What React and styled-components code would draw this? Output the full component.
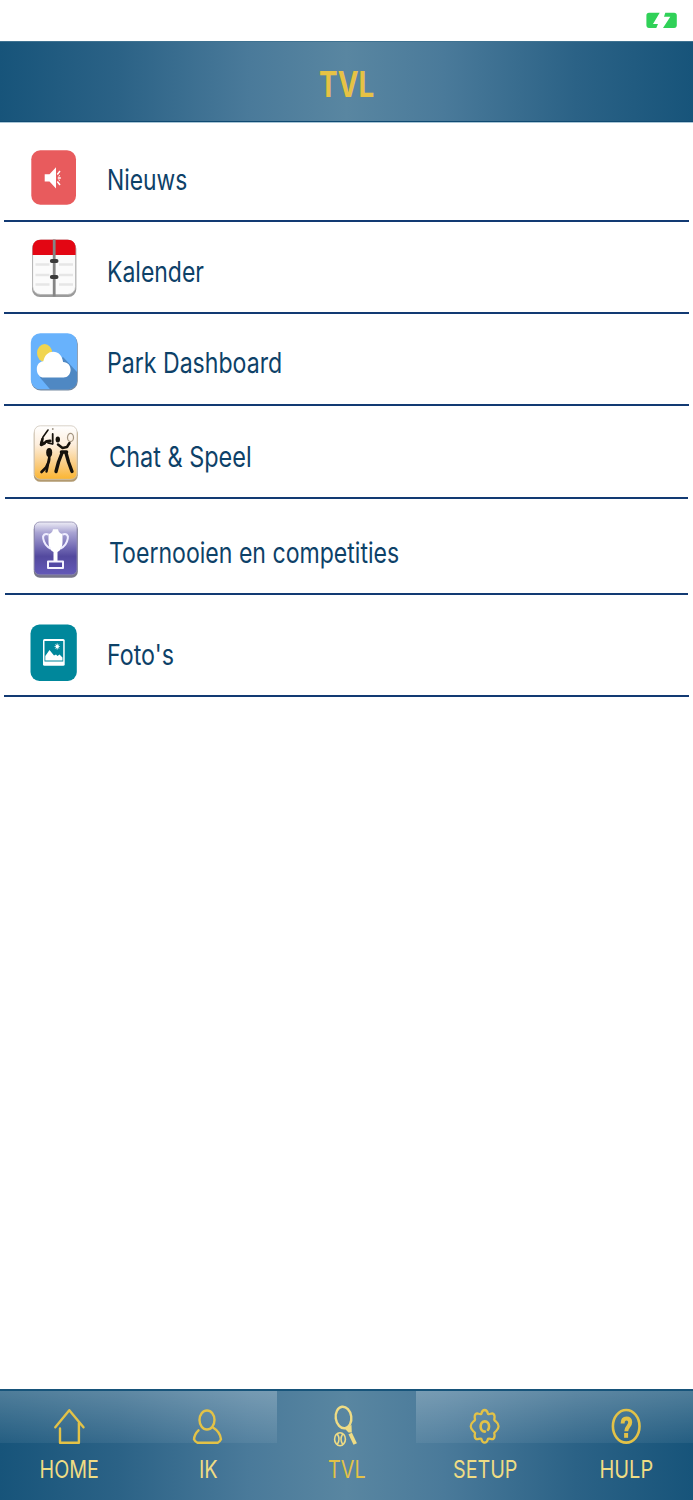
import styled, { createGlobalStyle } from 'styled-components';

const GlobalStyle = createGlobalStyle`
  * {
    box-sizing: border-box;
  }

  body {
    margin: 0;
    background: #fff;
    font-family: Inter, 'Liberation Sans', sans-serif;
  }
`;

const Screen = styled.div`
  width: 693px;
  height: 1500px;
  display: flex;
  flex-direction: column;
  background: #fff;
  overflow: hidden;
`;

const StatusBar = styled.div`
  height: 41px;
  padding: 12px 15px 0 0;
  display: flex;
  justify-content: flex-end;
`;

const Header = styled.header`
  height: 81px;
  margin-bottom: 1px;
  display: flex;
  justify-content: center;
  background: linear-gradient(90deg, #17547a 0%, #2b6286 17%, #4a7a9a 36%, #5986a1 50%, #4a7a9a 64%, #2b6286 83%, #17547a 100%);
  border-top: 1px solid #3f7291;
  border-bottom: 1px solid #0f4a72;
  box-shadow: 0 1px 0 #a9c6d6;
`;

const Title = styled.h1`
  margin: 0;
  padding-top: 21px;
  color: #e6c245;
  font-size: 35px;
  line-height: 42px;
  font-weight: 700;
  transform: scaleX(${({ $scale }) => $scale});
`;

const List = styled.ul`
  flex: 1;
  margin: 0;
  padding: 0;
  list-style: none;
`;

const Row = styled.li`
  height: ${({ $height }) => $height}px;
  margin: 0 ${({ $inset }) => $inset}px;
  padding: ${({ $top }) => $top}px 0 0 ${({ $inset }) => 28 - $inset}px;
  display: flex;
  align-items: flex-start;
  border-bottom: 2px solid #123a73;
`;

const RowIcon = styled.svg`
  width: 52px;
  height: 64px;
  flex: none;
  display: block;
`;

const RowLabel = styled.span`
  margin: ${({ $y }) => $y}px 0 0 ${({ $x }) => $x}px;
  color: #0d4168;
  font-size: 28px;
  line-height: 34px;
  white-space: nowrap;
  transform-origin: left center;
  transform: scaleX(${({ $scale }) => $scale});
`;

const TabBar = styled.nav`
  height: 111px;
  display: grid;
  grid-template-columns: 139px 138px 139px 138px 139px;
  border-top: 2px solid #17547a;
  background: linear-gradient(90deg, #17547a 0%, #2b6286 17%, #4a7a9a 36%, #5986a1 50%, #4a7a9a 64%, #2b6286 83%, #17547a 100%);
`;

const Tab = styled.div`
  display: flex;
  flex-direction: column;
  align-items: center;
  padding-top: 13px;
  padding-left: ${({ $shift = 0 }) => $shift}px;
  background: ${({ $active }) =>
    $active ? 'none' : 'linear-gradient(180deg, rgba(255,255,255,0.24), rgba(255,255,255,0.06)) top / 100% 52px no-repeat'};
`;

const TabIcon = styled.svg`
  width: 44px;
  height: 44px;
  fill: none;
  stroke: ${({ $pale }) => ($pale ? '#efdc84' : '#e3c247')};
  stroke-width: 2.4;
  stroke-linecap: round;
  stroke-linejoin: round;
`;

const TabLabel = styled.span`
  margin-top: 6px;
  color: ${({ $active }) => ($active ? '#e3c247' : '#efdc84')};
  font-size: 24px;
  line-height: 32px;
  transform: scaleX(${({ $scale }) => $scale});
`;

const NewsIcon = () => (
  <RowIcon viewBox="0 0 52 64">
    <rect x="3.3" y="4.3" width="44.7" height="54.4" rx="9" fill="#e85b5d" />
    <path d="M16.7 28.2h4.8l6.5-7v21.4l-6.5-7h-4.8z" fill="#fff" />
    <path d="M29.3 28.5l2.7-3.5M29.8 32h3M29.3 35.5l2.7 3.5" stroke="#fff" strokeWidth="1.5" />
    <path d="M30.5 30.3l1.5-.8M30.5 33.7l1.5.8" stroke="#fff" strokeWidth="1" />
  </RowIcon>
);

const CalendarIcon = () => (
  <RowIcon viewBox="0 0 52 64">
    <rect x="4" y="5" width="44.3" height="56" rx="8" fill="#9a9a9a" />
    <rect x="4.6" y="4" width="43" height="54.5" rx="8" fill="#fbfbfb" stroke="#b4b4b4" strokeWidth="0.8" />
    <path d="M4.6 19v-7c0-5 3-8.3 8-8.3h27c5 0 8 3.3 8 8.3v7z" fill="#e30613" />
    <path d="M7.5 28.5h14M31 28.5h14M7.5 39h14M31 39h14M7.5 48.5h14M31 48.5h14" stroke="#e6e6e6" strokeWidth="2.5" />
    <path d="M26.2 3.5v57" stroke="#858585" strokeWidth="2.8" />
    <path d="M23.8 25h4.8M23.8 41h4.8" stroke="#3a3a3a" strokeWidth="3.8" strokeLinecap="round" />
  </RowIcon>
);

const WeatherIcon = () => (
  <RowIcon viewBox="0 0 52 64">
    <rect x="3.3" y="4.5" width="46.5" height="56" rx="9.5" fill="#7689a0" />
    <rect x="2.8" y="3.2" width="46.2" height="56" rx="9.5" fill="#68b2fc" />
    <path d="M12 47.4l10 11.8h17.5c6 0 9.5-4 9.5-9.5V42L35 27z" fill="#4f88c3" />
    <ellipse cx="16.6" cy="23" rx="7.6" ry="9" fill="#f1d550" />
    <path d="M16 47.5c-4.4 0-7.2-3.7-7.2-8.3 0-4.4 2.8-7.8 6.5-7.9 1.3-6.3 5-9.6 10-9.6 5.2 0 9 3.9 9.8 10.2 4.7.1 7.5 3.5 7.5 7.9 0 4.500-3 7.700-7 7.700z" fill="#fff" />
  </RowIcon>
);

const PlayersIcon = () => (
  <RowIcon viewBox="0 0 52 64">
    <defs>
      <linearGradient id="playersFill" x1="0" y1="0" x2="0" y2="1">
        <stop offset="0" stopColor="#fff" />
        <stop offset="0.35" stopColor="#fdeedd" />
        <stop offset="0.75" stopColor="#fac978" />
        <stop offset="1" stopColor="#fbb530" />
      </linearGradient>
    </defs>
    <rect x="5.8" y="5.5" width="44" height="54.3" rx="6.5" fill="#b29a70" />
    <rect x="6.3" y="3.8" width="42.7" height="53.5" rx="6" fill="url(#playersFill)" stroke="#cfc7ba" strokeWidth="0.8" />
    <g fill="none" stroke="#16120c" strokeLinecap="round" strokeLinejoin="round">
      <path d="M20 8l-5 7-2 6" strokeWidth="1.6" />
      <path d="M14.5 17l-1.5 5.5" strokeWidth="2.6" />
      <path d="M13.5 22.5l3-1.5M18.5 19.5l3.500-.5" strokeWidth="3.2" />
      <path d="M24.7 12v9.500" strokeWidth="1.8" />
      <path d="M20 21l4.500 1" strokeWidth="1.6" />
      <path d="M21.5 32l-.5 7-3 6.500-4.500 4.500" strokeWidth="2.6" />
      <path d="M21 37l-1.500 8-1 4.500" strokeWidth="2.4" />
      <path d="M30 22.500l4.500 3.500 4.500-1 2.500-4" strokeWidth="2.5" />
      <path d="M33.500 30h5" strokeWidth="3.600" />
      <path d="M34 31l-3.500 9-2.500 9.500M38 31l2.500 9 3.500 9.500" strokeWidth="3.400" />
      <ellipse cx="42.5" cy="15.5" rx="3" ry="4.2" stroke="#a59682" strokeWidth="1.2" />
    </g>
    <ellipse cx="29.8" cy="17.5" rx="2.2" ry="3" fill="#16120c" />
    <ellipse cx="21.2" cy="30.500" rx="3" ry="4.500" fill="#16120c" />
    <circle cx="24.8" cy="7" r="0.9" fill="#9a9184" />
  </RowIcon>
);

const TrophyIcon = () => (
  <RowIcon viewBox="0 0 52 64">
    <defs>
      <linearGradient id="trophyFill" x1="0" y1="0" x2="0" y2="1">
        <stop offset="0" stopColor="#eeedf6" />
        <stop offset="0.2" stopColor="#a9a4d3" />
        <stop offset="0.5" stopColor="#6f67b2" />
        <stop offset="0.65" stopColor="#53499e" />
        <stop offset="1" stopColor="#6459b8" />
      </linearGradient>
    </defs>
    <rect x="5.8" y="5.5" width="44" height="54.3" rx="6" fill="#77768a" />
    <rect x="6.3" y="4" width="42.7" height="52.8" rx="5.5" fill="url(#trophyFill)" stroke="#8d88ad" strokeWidth="0.8" />
    <path d="M20.5 16c2.5-.8 4-1.8 4.5-4.8h5c.5 3 2 4 4.5 4.8v8c0 5-1.800 8.500-5 10v9h-4v-9c-3.200-1.500-5-5-5-10z" fill="#fff" />
    <path d="M20.5 16.500c-3.500-1.500-6 .5-5.300 4 .8 4.500 3.300 8 7.300 10M34.500 16.500c3.500-1.500 6 .5 5.300 4-.8 4.500-3.300 8-7.300 10" fill="none" stroke="#eeecff" strokeWidth="2" />
    <path d="M20 43.500h15v6.500H20z" fill="#5147a5" stroke="#f5f3ff" strokeWidth="2" strokeLinejoin="round" />
  </RowIcon>
);

const PhotoIcon = () => (
  <RowIcon viewBox="0 0 52 64">
    <rect x="2.5" y="3.5" width="46.3" height="56.5" rx="9" fill="#00879b" />
    <rect x="15" y="18" width="21.7" height="26.8" rx="1.5" fill="#fff" />
    <path d="M16.5 20h18.7v20.5H16.5z" fill="#00879b" />
    <path d="M17.3 39.5V35l4.200-6 4.500 5.500 2-1 1.500 1.500 2-1.500 3 3v3z" fill="#fff" />
    <ellipse cx="29.2" cy="25.5" rx="1.6" ry="1.9" fill="#fff" />
    <path d="M29.2 22.3v6.4M26.4 25.5h5.6M27.2 23.2l4 4.6M31.2 23.2l-4 4.6" stroke="#fff" strokeWidth="0.6" />
  </RowIcon>
);

const rows = [
  { label: 'Nieuws', icon: <NewsIcon />, height: 99, top: 23, inset: 4, x: 27.3, y: 17, scale: 0.815 },
  { label: 'Kalender', icon: <CalendarIcon />, height: 92, top: 14, inset: 4, x: 27.3, y: 19, scale: 0.82 },
  { label: 'Park Dashboard', icon: <WeatherIcon />, height: 92, top: 16, inset: 4, x: 27.3, y: 16, scale: 0.825 },
  { label: 'Chat & Speel', icon: <PlayersIcon />, height: 93, top: 16, inset: 5, x: 29, y: 18, scale: 0.838 },
  { label: 'Toernooien en competities', icon: <TrophyIcon />, height: 96, top: 19, inset: 5, x: 29, y: 18, scale: 0.824 },
  { label: "Foto's", icon: <PhotoIcon />, height: 102, top: 26, inset: 4, x: 27.3, y: 16.5, scale: 0.83 },
];

const HomeIcon = () => (
  <TabIcon viewBox="0 0 44 44">
    <path d="M7.3 23.3L21.3 6.2 35.5 23.3M12 24.5v14.3h18.9V19" />
  </TabIcon>
);

const PersonIcon = () => (
  <TabIcon viewBox="0 0 44 44">
    <ellipse cx="21" cy="16" rx="7.5" ry="9.5" />
    <path d="M12.5 26.3c-2.6 2.5-4.2 5.5-4.5 9M11.5 38.8h20.300c1.400-.8 2.500-2 3.200-3.500-.5-5-3.500-9-8-11.800M8 35.300c.7 1.500 2 2.700 3.500 3.500" />
  </TabIcon>
);

const RacketIcon = () => (
  <TabIcon viewBox="0 0 44 44" $pale>
    <ellipse cx="18.5" cy="13.5" rx="7.8" ry="10.8" transform="rotate(-8 18.5 13.5)" />
    <path d="M19.5 24.3l4 4.200h3.300l-.3-7.500z" fill="#efdc84" stroke="none" />
    <path d="M25.2 29.500l5 10.500" strokeWidth="3.8" strokeLinecap="butt" />
    <ellipse cx="15" cy="35.2" rx="5.400" ry="6.500" strokeWidth="1.6" />
    <path d="M12.600 30.500c1.800 3 1.800 6.400 0 9.400M17.400 30.500c-1.800 3-1.800 6.400 0 9.400" strokeWidth="1.5" />
  </TabIcon>
);

const GearIcon = () => (
  <TabIcon viewBox="0 0 44 44">
    <g transform="translate(1.900 0.700) scale(0.940 0.970)">
      <path d="M21 5.500c2.200 0 3 1.300 3.600 4 2.200.9 3.800-1.500 5.800 0 1.700 1.500 1.500 3.300.8 5.900 1.200 2.400 4.600 2.400 4.600 6.900s-3.400 4.500-4.600 6.900c.7 2.600.9 4.400-.8 5.900-2 1.500-3.600-.9-5.800 0-.6 2.700-1.400 4-3.600 4s-3-1.300-3.600-4c-2.200-.9-3.800 1.500-5.800 0-1.700-1.500-1.500-3.300-.8-5.900-1.200-2.400-4.600-2.400-4.600-6.900s3.400-4.500 4.600-6.900c-.7-2.600-.9-4.400.8-5.900 2-1.500 3.600.9 5.800 0 .6-2.700 1.400-4 3.600-4z" />
      <path d="M21.300 27.700c-2.800 0-4.600-2.200-4.600-5.200s1.800-5.300 4.500-5.300 4.500 2.200 4.500 5.200c0 1.400-.4 2.600-1.200 3.500" strokeWidth="2.8" />
    </g>
  </TabIcon>
);

const HelpIcon = () => (
  <TabIcon viewBox="0 0 44 44">
    <ellipse cx="21.2" cy="22.3" rx="13.3" ry="16.3" strokeWidth="2.6" />
    <path d="M17.6 19.500c0-3.500 1.300-5 3.900-5 2.500 0 3.700 1.400 3.700 3.800 0 4.200-3.900 4.200-3.900 8.900" strokeWidth="4" strokeLinecap="butt" />
    <path d="M21.100 29v4.800" strokeWidth="4" strokeLinecap="butt" />
  </TabIcon>
);

const tabs = [
  { label: 'HOME', icon: <HomeIcon />, scale: 0.82, shift: 0 },
  { label: 'IK', icon: <PersonIcon />, scale: 0.83, shift: -1 },
  { label: 'TVL', icon: <RacketIcon />, scale: 0.82, shift: 0, active: true },
  { label: 'SETUP', icon: <GearIcon />, scale: 0.82, shift: 0 },
  { label: 'HULP', icon: <HelpIcon />, scale: 0.83, shift: 6 },
];

export default function App() {
  return (
    <>
      <GlobalStyle />
      <Screen>
        <StatusBar>
          <svg width="32" height="17" viewBox="0 0 32 17">
            <path d="M3 .8h10.700L7 12h5l-1.700 3.900H3c-1.600 0-2.600-1-2.600-2.600V3.400C.4 1.800 1.400.8 3 .8zM19.300.8H28c1.800 0 2.800 1 2.800 2.600v9.900c0 1.600-1 2.600-2.800 2.600H17l7.300-11.100H18z" fill="#30d158" />
          </svg>
        </StatusBar>
        <Header>
          <Title $scale={0.795}>TVL</Title>
        </Header>
        <List>
          {rows.map((row) => (
            <Row key={row.label} $height={row.height} $top={row.top} $inset={row.inset}>
              {row.icon}
              <RowLabel $x={row.x} $y={row.y} $scale={row.scale}>{row.label}</RowLabel>
            </Row>
          ))}
        </List>
        <TabBar>
          {tabs.map((tab) => (
            <Tab key={tab.label} $active={tab.active} $shift={tab.shift}>
              {tab.icon}
              <TabLabel $active={tab.active} $scale={tab.scale}>{tab.label}</TabLabel>
            </Tab>
          ))}
        </TabBar>
      </Screen>
    </>
  );
}
